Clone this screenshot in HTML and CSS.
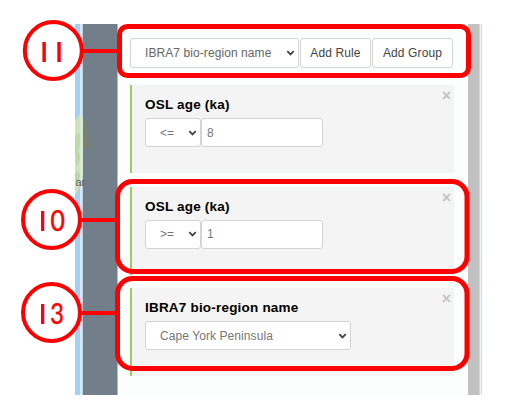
FILE: index.html
```html
<!DOCTYPE html>
<html lang="en">
<head>
<meta charset="utf-8">
<title>Filter rules</title>
<link rel="stylesheet" href="styles.css">
</head>
<body>
<main class="window">
  <div class="map">
    <svg class="land" width="42" height="371" viewBox="75 24 42 371">
      <defs><filter id="soft"><feGaussianBlur stdDeviation=".6"/></filter></defs>
      <g filter="url(#soft)">
        <path d="M73 123 L78 117 L80 113 L83 118 L83 174 L79 188 L76 194 L73 196 Z" fill="#cbe5b4"/>
        <path d="M75 137l4-5 2 9-3 10 3 8-5 7-1-14z" fill="#b9dba4"/>
        <path d="M75 174l3-3 2 5-2 6-3 2z" fill="#b6d8a0"/>
        <path d="M83 116 L86 122 L88 128 L89 138 L91 147 L88 149 L85 145 L83 152 Z" fill="#79816f"/>
      </g>
      <rect x="80" y="24" width="3" height="371" fill="#e5f0fa" opacity=".5"/>
      <text x="75.5" y="186" class="place">ar</text>
    </svg>
  </div>
  <section class="panel">
    <div class="toolbar">
      <div class="control field-picker"><span>IBRA7 bio-region name</span><svg class="chevron" viewBox="0 0 8 6"><path d="M.8 1.2 4 4.4 7.2 1.2"/></svg></div>
      <div class="control button">Add Rule</div>
      <div class="control button group">Add Group</div>
    </div>
    <article class="rule">
      <span class="close">×</span>
      <h2>OSL age (ka)</h2>
      <div class="row">
        <div class="control operator"><span>&lt;=</span><svg class="chevron" viewBox="0 0 8 6"><path d="M.8 1.2 4 4.4 7.2 1.2"/></svg></div>
        <div class="control value">8</div>
      </div>
    </article>
    <article class="rule">
      <span class="close">×</span>
      <h2>OSL age (ka)</h2>
      <div class="row">
        <div class="control operator"><span>&gt;=</span><svg class="chevron" viewBox="0 0 8 6"><path d="M.8 1.2 4 4.4 7.2 1.2"/></svg></div>
        <div class="control value">1</div>
      </div>
    </article>
    <article class="rule">
      <span class="close">×</span>
      <h2>IBRA7 bio-region name</h2>
      <div class="row">
        <div class="control region"><span>Cape York Peninsula</span><svg class="chevron" viewBox="0 0 8 6"><path d="M.8 1.2 4 4.4 7.2 1.2"/></svg></div>
      </div>
    </article>
  </section>
  <div class="scrollbar"></div>
</main>
<svg class="callouts" width="508" height="415" viewBox="0 0 508 415">
  <defs>
    <clipPath id="stem-a"><rect x="42.4" y="38" width="3.5" height="28"/></clipPath>
    <clipPath id="stem-b"><rect x="57.3" y="38" width="3.5" height="28"/></clipPath>
    <clipPath id="stem-c"><rect x="41" y="205" width="3.5" height="30"/></clipPath>
    <clipPath id="stem-d"><rect x="41" y="298" width="3.5" height="30"/></clipPath>
  </defs>
  <g class="frame">
    <rect x="119.5" y="26.5" width="349" height="49" rx="8"/>
    <rect x="117.5" y="181.5" width="349.5" height="90" rx="15"/>
    <rect x="117.5" y="278.5" width="349.5" height="90" rx="15"/>
  </g>
  <g class="lead">
    <path d="M82 51h36M80 220h36M80 313h36"/>
    <circle cx="53.3" cy="50.5" r="28.5"/>
    <circle cx="51.5" cy="219.5" r="28.5"/>
    <circle cx="51.5" cy="312.5" r="28.5"/>
  </g>
  <g class="one">
    <text x="36" y="62" clip-path="url(#stem-a)">1</text>
    <text x="51" y="62" clip-path="url(#stem-b)">1</text>
    <text x="34.6" y="231" clip-path="url(#stem-c)">1</text>
    <text x="34.6" y="324" clip-path="url(#stem-d)">1</text>
  </g>
  <g class="digit">
    <text transform="translate(50.5 231) scale(.88 1)">0</text>
    <text transform="translate(50.3 324) scale(.84 1)">3</text>
  </g>
</svg>
</body>
</html>
```
FILE: styles.css
```css
* { box-sizing: border-box; }
body {
  margin: 0;
  width: 508px;
  height: 415px;
  overflow: hidden;
  background: #fff;
  font: 12px "Liberation Sans", Arial, sans-serif;
  color: #555;
}
.window {
  display: grid;
  grid-template-columns: 43px 350px 14px;
  width: 407px;
  height: 371px;
  margin: 24px 0 0 75px;
}
.map {
  background: linear-gradient(90deg, #a4d0f6 0 5px, #c3e0f8 5px 7px, #a0b2c2 7px 8px, #727f8b 8px 42px, #b4bbc1 42px);
}
.land { display: block; }
.place { font: 11px "Liberation Sans", sans-serif; fill: #555c60; }
.panel { background: #fcfefe; padding: 13.5px 14px 0 12px; }
.toolbar { display: flex; gap: 1px; height: 30px; margin-bottom: 17.5px; }
.control {
  display: flex;
  align-items: center;
  background: #fff;
  border: 1px solid #d4d4d4;
  border-radius: 3px;
  height: 29px;
  white-space: nowrap;
}
.toolbar .control { height: 30px; }
.control span { flex: 1; }
.field-picker { width: 169px; padding: 0 3px 0 14px; letter-spacing: .08px; color: #666; }
.button { width: 71px; justify-content: center; color: #444; letter-spacing: .12px; }
.group { width: 81px; }
.chevron { width: 9px; height: 6px; fill: none; stroke: #444; stroke-width: 1.8; }
.rule {
  position: relative;
  height: 88px;
  margin-bottom: 13.5px;
  padding: 11px 0 0 13px;
  border-left: 2px solid #9ccc65;
  background: #f4f4f4;
}
h2 { margin: 0; height: 22px; font-size: 13.5px; line-height: 18px; color: #000; letter-spacing: .2px; }
.row { display: flex; }
.operator { width: 56px; padding: 0 3px 0 14px; color: #777; }
.value { width: 122px; padding-left: 5px; color: #777; }
.region { width: 206px; padding: 0 3px 0 14px; color: #777; letter-spacing: .08px; }
.close { position: absolute; right: 3px; top: 2px; font-size: 16px; line-height: 18px; font-weight: bold; color: #c4c4c4; }
.scrollbar {
  background: linear-gradient(90deg, #c1c1c1 0 11px, #d7d4d2 11px 12px, #eef4fa 12px 13px, #c8dff3 13px);
}
.callouts { position: absolute; left: 0; top: 0; }
.frame { fill: none; stroke: #f00; stroke-width: 5; }
.lead { fill: #fff; stroke: #f00; stroke-width: 4; }
.one { font: 700 27.5px Inter, sans-serif; fill: #f00; }
.digit { font: 28px Lato, sans-serif; fill: #f00; stroke: #f00; stroke-width: .5; }
```
